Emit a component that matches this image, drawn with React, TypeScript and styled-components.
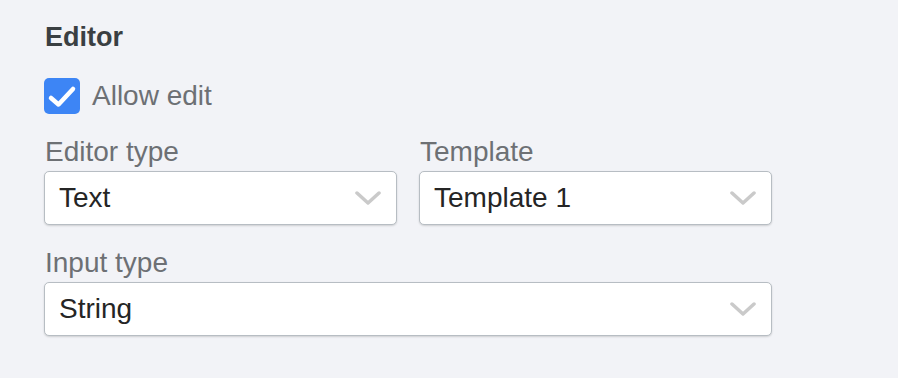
import React from 'react';
import styled, {createGlobalStyle} from "styled-components";

const GlobalStyle = createGlobalStyle`
    html, body {
        margin: 0;
        padding: 0;
        background: #f2f3f7;
        font-family: "Liberation Sans", Arial, sans-serif;
    }
`;

const Panel = styled.div`
    width: 898px;
    height: 378px;
    box-sizing: border-box;
    padding: 21px 0 0 44px;
`;

const Title = styled.h2`
    margin: 0 0 25px 1px;
    font-size: 27px;
    line-height: 32px;
    font-weight: 700;
    color: #3a3f42;
`;

const CheckRow = styled.label`
    display: flex;
    align-items: center;
    gap: 12px;
    height: 36px;
    margin-bottom: 22px;
    cursor: pointer;
`;

const Box = styled.span<{ $checked: boolean }>`
    width: 36px;
    height: 36px;
    border-radius: 5px;
    background: ${p => p.$checked ? "#3d85f5" : "#fff"};
    display: flex;
    align-items: center;
    justify-content: center;
`;

const CheckText = styled.span`
    font-size: 28px;
    line-height: 36px;
    color: #6d7074;
`;

const Fields = styled.div`
    display: grid;
    grid-template-columns: 353px 353px;
    column-gap: 22px;
    row-gap: 22px;
`;

const Field = styled.div<{ $wide?: boolean }>`
    display: flex;
    flex-direction: column;
    gap: 3px;
    grid-column: ${p => p.$wide ? "1 / span 2" : "auto"};
`;

const Label = styled.span`
    font-size: 28px;
    line-height: 32px;
    color: #6d7074;
    padding-left: 1px;
`;

const Select = styled.div`
    height: 54px;
    box-sizing: border-box;
    border: 1px solid #b7bdc3;
    border-radius: 5px;
    background: #fff;
    box-shadow: 0 1px 2px rgba(0, 0, 0, 0.15);
    display: flex;
    align-items: center;
    justify-content: space-between;
    padding: 0 15px 0 14px;
`;

const Value = styled.span`
    font-size: 28px;
    line-height: 52px;
    color: #252525;
`;

const Chevron = () => (
    <svg width="26" height="14" viewBox="0 0 26 14">
        <path d="M2 2 L13 12 L24 2" fill="none" stroke="#cacaca" strokeWidth="3.5"
              strokeLinecap="round" strokeLinejoin="round"/>
    </svg>
);

const Dropdown = ({value}: { value: string }) => (
    <Select>
        <Value>{value}</Value>
        <Chevron/>
    </Select>
);

const App = () => {
    return (
        <>
            <GlobalStyle/>
            <Panel>
                <Title>Editor</Title>
                <CheckRow>
                    <Box $checked>
                        <svg width="36" height="36" viewBox="0 0 36 36">
                            <path d="M7 20 L14.5 26.5 L29 11" fill="none" stroke="#fff" strokeWidth="4.5"
                                  strokeLinecap="round" strokeLinejoin="round"/>
                        </svg>
                    </Box>
                    <CheckText>Allow edit</CheckText>
                </CheckRow>
                <Fields>
                    <Field>
                        <Label>Editor type</Label>
                        <Dropdown value="Text"/>
                    </Field>
                    <Field>
                        <Label>Template</Label>
                        <Dropdown value="Template 1"/>
                    </Field>
                    <Field $wide>
                        <Label>Input type</Label>
                        <Dropdown value="String"/>
                    </Field>
                </Fields>
            </Panel>
        </>
    )
};

export default App;
